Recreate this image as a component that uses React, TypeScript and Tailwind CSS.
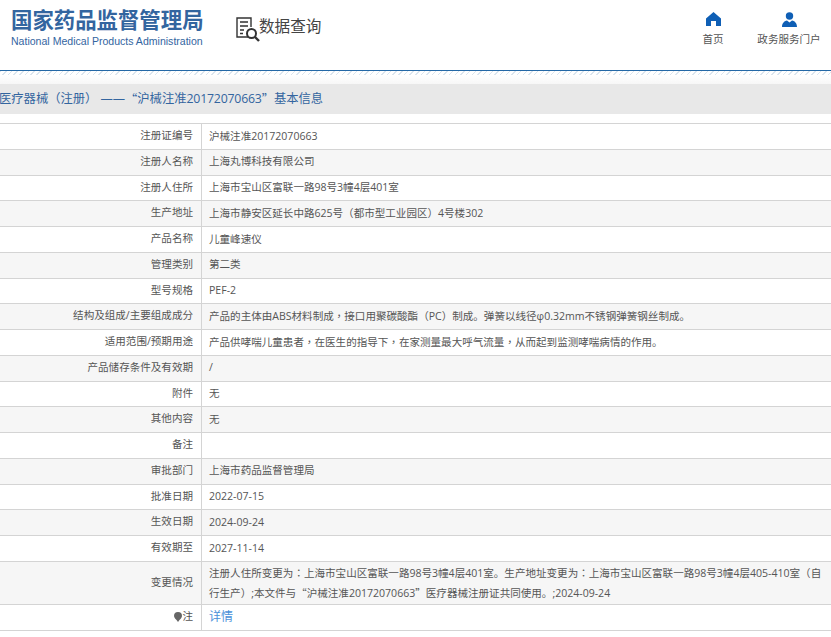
const rows: [string, string][] = [
  ["注册证编号", "沪械注准20172070663"],
  ["注册人名称", "上海丸博科技有限公司"],
  ["注册人住所", "上海市宝山区富联一路98号3幢4层401室"],
  ["生产地址", "上海市静安区延长中路625号（都市型工业园区）4号楼302"],
  ["产品名称", "儿童峰速仪"],
  ["管理类别", "第二类"],
  ["型号规格", "PEF-2"],
  ["结构及组成/主要组成成分", "产品的主体由ABS材料制成，接口用聚碳酸酯（PC）制成。弹簧以线径φ0.32mm不锈钢弹簧钢丝制成。"],
  ["适用范围/预期用途", "产品供哮喘儿童患者，在医生的指导下，在家测量最大呼气流量，从而起到监测哮喘病情的作用。"],
  ["产品储存条件及有效期", "/"],
  ["附件", "无"],
  ["其他内容", "无"],
  ["备注", ""],
  ["审批部门", "上海市药品监督管理局"],
  ["批准日期", "2022-07-15"],
  ["生效日期", "2024-09-24"],
  ["有效期至", "2027-11-14"],
];

function Punct({ text }: { text: string }) {
  return (
    <>
      {text.split(/([，：“”])/).map((part, i) =>
        i % 2 === 1 ? (
          <span
            key={i}
            className={part === "“" || part === "”" ? "[font-family:'Noto_Sans_CJK_SC',sans-serif]" : "[font-family:'Noto_Sans_CJK_TC',sans-serif]"}
          >
            {part}
          </span>
        ) : (
          <span key={i}>{part}</span>
        )
      )}
    </>
  );
}

function Row({ label, odd, children, tall }: { label: React.ReactNode; odd: boolean; children: React.ReactNode; tall?: boolean }) {
  return (
    <div className={`flex border-b border-[#d4d4d4] ${odd ? "bg-[#f6f6f6]" : "bg-white"} ${tall ? "h-[43px]" : "h-[25.75px]"}`}>
      <div className="w-[202px] shrink-0 flex items-center justify-end pr-[8px] pb-[0.5px] border-r border-[#d4d4d4] text-[#555]">{label}</div>
      <div className="flex-1 pl-[7px] pr-[4px] pb-[0.5px] flex items-center text-[#555] leading-[19px]">
        <div>{children}</div>
      </div>
    </div>
  );
}

export default function App() {
  return (
    <div className="w-[831px] h-[637px] overflow-hidden bg-white text-[10.56px] [font-family:'Open_Sans','Noto_Sans_CJK_SC',sans-serif]">
      <header className="h-[71px] flex items-start border-b border-[#2468a6]">
        <div className="ml-[11px] mt-[7px] w-[200px]">
          <div className="text-[21.4px] leading-[26px] font-bold text-[#33659f] whitespace-nowrap">国家药品监督管理局</div>
          <div className="text-[10.55px] leading-[12px] mt-[2px] text-[#33659f] whitespace-nowrap [font-family:'Liberation_Sans',sans-serif]">National Medical Products Administration</div>
        </div>
        <div className="ml-[24px] mt-[16px] flex items-start">
          <svg width="25" height="26" viewBox="0 0 25 26" fill="none" stroke="#333" strokeWidth="1.4">
            <path d="M13 21H2V2h14v9" />
            <path d="M5 6h8M5 10h8M5 14h4M5 17.500h3" />
            <circle cx="16.5" cy="17.5" r="4.5" strokeWidth="2" />
            <path d="M20 21l4 4" strokeWidth="2.4" />
          </svg>
          <span className="text-[15.6px] leading-[20px] text-[#444] -ml-[1px]">数据查询</span>
        </div>
        <nav className="ml-auto flex text-[#555]">
          <div className="w-[44px] mr-[19px] mt-[12px] flex flex-col items-center">
            <svg width="15" height="14" viewBox="0 0 15 14" fill="#0f5fb5">
              <path d="M7.5 0L15 6.5V14H10V9H5v5H0V6.5z" />
            </svg>
            <span className="mt-[6px] leading-[14px]">首页</span>
          </div>
          <div className="w-[70px] mr-[7px] mt-[12px] flex flex-col items-center">
            <svg width="15" height="15" viewBox="0 0 15 15" fill="#0f5fb5">
              <circle cx="7.5" cy="4" r="3.7" />
              <path d="M0 15c0-3.500 2-6 5-6.500l2.500 2 2.500-2c3 .5 5 3 5 6.500z" />
            </svg>
            <span className="mt-[5px] leading-[14px] whitespace-nowrap">政务服务门户</span>
          </div>
        </nav>
      </header>
      <div className="h-[4px] bg-[repeating-linear-gradient(135deg,#dbe5ee_0px,#dbe5ee_1px,#ffffff_1px,#ffffff_4px)]" />
      <div className="h-[9px] bg-gradient-to-b from-[#ffffff] to-[#f7f7f7]" />
      <div className="h-[30px] bg-[#e8e8e8] flex items-center text-[12.3px] text-[#33659f] whitespace-nowrap -ml-[1px]">
        <span>医疗器械（注册）</span>
        <span className="ml-[3px]">——</span>
        <span className="[font-family:'Noto_Sans_CJK_SC',sans-serif]">“</span>
        <span>沪械注准</span>
        <span className="tracking-[-0.2px]">20172070663</span>
        <span className="[font-family:'Noto_Sans_CJK_SC',sans-serif]">”</span>
        <span>基本信息</span>
      </div>
      <div className="h-[9px]" />
      <div className="border-t border-[#d4d4d4]">
        {rows.map(([k, v], i) => (
          <Row key={k} label={k} odd={i % 2 === 1}><Punct text={v} /></Row>
        ))}
        <Row label="变更情况" odd tall>
          <div className="whitespace-nowrap"><Punct text="注册人住所变更为：上海市宝山区富联一路98号3幢4层401室。生产地址变更为：上海市宝山区富联一路98号3幢4层405-410室（自" /></div>
          <div className="whitespace-nowrap"><Punct text="行生产）;本文件与“沪械注准20172070663”医疗器械注册证共同使用。;2024-09-24" /></div>
        </Row>
        <Row
          label={
            <span className="flex items-center">
              <svg width="8" height="10" viewBox="0 0 8 10" fill="#666"><path d="M4 0a4 4 0 0 1 4 4c0 2-2 3-4 6C2 7 0 6 0 4a4 4 0 0 1 4-4z" /></svg>
              注
            </span>
          }
          odd={false}
        >
          <span className="text-[#4a90d9] text-[12px]">详情</span>
        </Row>
      </div>
    </div>
  );
}
